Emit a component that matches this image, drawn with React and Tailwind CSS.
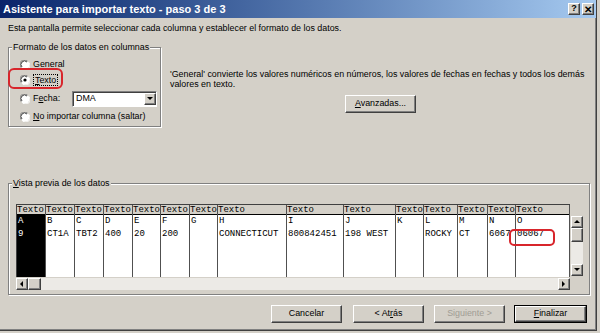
import React from 'react';

const COLS = [
  { w: 'w-[29px]', h: 'A', v: '9', sel: true },
  { w: 'w-[29px]', h: 'B', v: 'CT1A' },
  { w: 'w-[29px]', h: 'C', v: 'TBT2' },
  { w: 'w-[29px]', h: 'D', v: '400' },
  { w: 'w-[28px]', h: 'E', v: '20' },
  { w: 'w-[29px]', h: 'F', v: '200' },
  { w: 'w-[28px]', h: 'G', v: '' },
  { w: 'w-[69px]', h: 'H', v: 'CONNECTICUT' },
  { w: 'w-[57px]', h: 'I', v: '800842451' },
  { w: 'w-[52px]', h: 'J', v: '198 WEST' },
  { w: 'w-[28px]', h: 'K', v: '' },
  { w: 'w-[34px]', h: 'L', v: 'ROCKY' },
  { w: 'w-[30px]', h: 'M', v: 'CT' },
  { w: 'w-[28px]', h: 'N', v: '6067' },
  { w: 'w-[54px]', h: 'O', v: '06067' },
];

const RAISED =
  'border border-t-white border-l-white border-r-[#404040] border-b-[#404040] shadow-[inset_-1px_-1px_0_#808080]';
const SUNKEN =
  'border border-t-[#808080] border-l-[#808080] border-r-white border-b-white shadow-[inset_1px_1px_0_#404040]';

function Radio({ checked }) {
  return (
    <svg width="10" height="10" viewBox="0 0 10 10" className="shrink-0">
      <circle cx="5" cy="5" r="4.5" fill="#fff" />
      <path d="M1.2 7.6 A4.5 4.5 0 0 1 7.6 1.2" stroke="#808080" strokeWidth="1" fill="none" />
      <path d="M2 7 A3.5 3.5 0 0 1 7 2" stroke="#404040" strokeWidth="1" fill="none" />
      <path d="M8.8 2.4 A4.5 4.5 0 0 1 2.4 8.8" stroke="#fff" strokeWidth="1" fill="none" />
      {checked && <circle cx="5" cy="5" r="1.6" fill="#000" />}
    </svg>
  );
}

function Button({ children, disabled, isDefault, className = '' }) {
  return (
    <div
      className={`h-[18px] w-[71px] bg-[#D4D0C8] ${isDefault ? 'border border-black' : ''} ${className}`}
    >
      <div
        className={`h-full w-full flex items-center justify-center ${RAISED} ${
          disabled ? 'text-[#A09C94]' : 'text-black'
        }`}
      >
        {children}
      </div>
    </div>
  );
}

function Arrow({ dir }) {
  const pts = {
    up: '1,5 4,2 7,5',
    down: '1,2 4,5 7,2',
    left: '5,1 2,4 5,7',
    right: '2,1 5,4 2,7',
  }[dir];
  return (
    <div className={`w-[12px] h-[12px] shrink-0 bg-[#D4D0C8] flex items-center justify-center ${RAISED}`}>
      <svg width="8" height="8" viewBox="0 0 8 8">
        <polygon points={pts} fill="#000" />
      </svg>
    </div>
  );
}

export default function App() {
  return (
    <div className="w-[600px] h-[333px] bg-[#D4D0C8] font-['Liberation_Sans',Arial,sans-serif] text-[8.9px] text-black overflow-hidden">
      <div className="w-[597px] h-[331px] flex flex-col border-r border-b border-r-[#404040] border-b-[#404040] shadow-[inset_-1px_-1px_0_#808080]">
        {/* title bar */}
        <div className="h-[18px] flex items-center pl-[3px] pr-[2px] bg-gradient-to-r from-[#0A246A] to-[#A6CAF0]">
          <span className="text-white font-bold text-[11px] flex-1">Asistente para importar texto - paso 3 de 3</span>
          <div className={`w-[12px] h-[12px] bg-[#D4D0C8] flex items-center justify-center font-bold text-[9px] ${RAISED}`}>?</div>
          <div className={`w-[12px] h-[12px] ml-[2px] bg-[#D4D0C8] flex items-center justify-center font-bold text-[10px] ${RAISED}`}>✕</div>
        </div>

        <div className="flex-1 flex flex-col pl-[8px] pr-[6px]">
          <p className="mt-[5px] leading-[11px]">
            Esta pantalla permite seleccionar cada columna y establecer el formato de los datos.
          </p>

          <div className="flex mt-[8px]">
            <fieldset className="w-[155px] h-[85px] border border-[#808080] shadow-[inset_1px_1px_0_#fff,1px_1px_0_#fff]">
              <legend className="ml-[3px] px-[1px] leading-[10px] bg-[#D4D0C8]">Formato de los datos en columnas</legend>
              <div className="flex flex-col pl-[11px] pt-[5px]">
                <div className="flex items-center gap-[3px] h-[15px]">
                  <Radio />
                  <span>General</span>
                </div>
                <div className="relative flex items-center gap-[3px] h-[15px]">
                  <Radio checked />
                  <span className="border border-dotted border-black px-[1px] leading-[10px]">
                    <u>T</u>exto
                  </span>
                  <div className="absolute left-[-12px] top-[-4px] w-[55px] h-[21px] rounded-[6px] border-2 border-[#D8252B]" />
                </div>
                <div className="flex items-center gap-[3px] h-[19px] mt-[2px]">
                  <Radio />
                  <span className="w-[36px]">
                    F<u>e</u>cha:
                  </span>
                  <div className={`w-[85px] h-[16px] bg-white flex items-center ${SUNKEN}`}>
                    <span className="flex-1 pl-[3px]">DMA</span>
                    <Arrow dir="down" />
                  </div>
                </div>
                <div className="flex items-center gap-[3px] h-[17px]">
                  <Radio />
                  <span>
                    <u>N</u>o importar columna (saltar)
                  </span>
                </div>
              </div>
            </fieldset>

            <div className="flex flex-col ml-[9px] pt-[27px]">
              <p className="leading-[10px] w-[420px]">
                'General' convierte los valores numéricos en números, los valores de fechas en fechas y todos los demás
                valores en texto.
              </p>
              <div className="flex mt-[6px] ml-[175px]">
                <Button>
                  <span>
                    <u>A</u>vanzadas...
                  </span>
                </Button>
              </div>
            </div>
          </div>

          <fieldset className="mt-[51px] w-[582px] h-[117px] border border-[#808080] shadow-[inset_1px_1px_0_#fff,1px_1px_0_#fff]">
            <legend className="ml-[3px] px-[1px] leading-[10px] bg-[#D4D0C8]">
              <u>V</u>ista previa de los datos
            </legend>
            <div className="flex flex-col pl-[7px] pt-[16px]">
              <div className="flex">
                <div className="relative flex border-l border-t border-[#404040] font-['Liberation_Mono','Courier_New',monospace] text-[9px]">
                  {COLS.map((c) => (
                    <div key={c.h} className={`flex flex-col ${c.w} border-r border-[#505050]`}>
                      <div className="h-[10px] leading-[10px] overflow-hidden whitespace-nowrap border-b border-black bg-[#D4D0C8]">
                        Texto
                      </div>
                      <div
                        className={`h-[62px] leading-[13px] pl-[1px] overflow-hidden whitespace-nowrap ${
                          c.sel ? 'bg-black text-white' : 'bg-white'
                        }`}
                      >
                        <div>{c.h}</div>
                        <div>{c.v}</div>
                      </div>
                    </div>
                  ))}
                  <div className="absolute left-[492px] top-[24px] w-[46px] h-[17px] rounded-[5px] border-2 border-[#D8252B]" />
                </div>
                <div className="flex flex-col ml-[1px] pt-[12px]">
                  <div className="flex flex-col w-[12px] h-[60px] bg-[#ECEAE6]">
                    <Arrow dir="up" />
                    <div className={`w-[12px] h-[14px] bg-[#D4D0C8] ${RAISED}`} />
                    <div className="flex-1" />
                    <Arrow dir="down" />
                  </div>
                </div>
              </div>
              <div className="flex w-[554px] h-[12px] mt-[1px] bg-[#ECEAE6]">
                <Arrow dir="left" />
                <div className={`w-[13px] h-[12px] bg-[#D4D0C8] ${RAISED}`} />
                <div className="flex-1" />
                <Arrow dir="right" />
              </div>
            </div>
          </fieldset>

          <div className="flex justify-end mt-[10px] pr-[3px]">
            <Button>Cancelar</Button>
            <Button className="ml-[11px]">
              <span>
                &lt; At<u>r</u>ás
              </span>
            </Button>
            <Button disabled className="ml-[10px]">
              Siguiente &gt;
            </Button>
            <Button isDefault className="ml-[9px] w-[73px]">
              <span>
                <u>F</u>inalizar
              </span>
            </Button>
          </div>
        </div>
      </div>
    </div>
  );
}
